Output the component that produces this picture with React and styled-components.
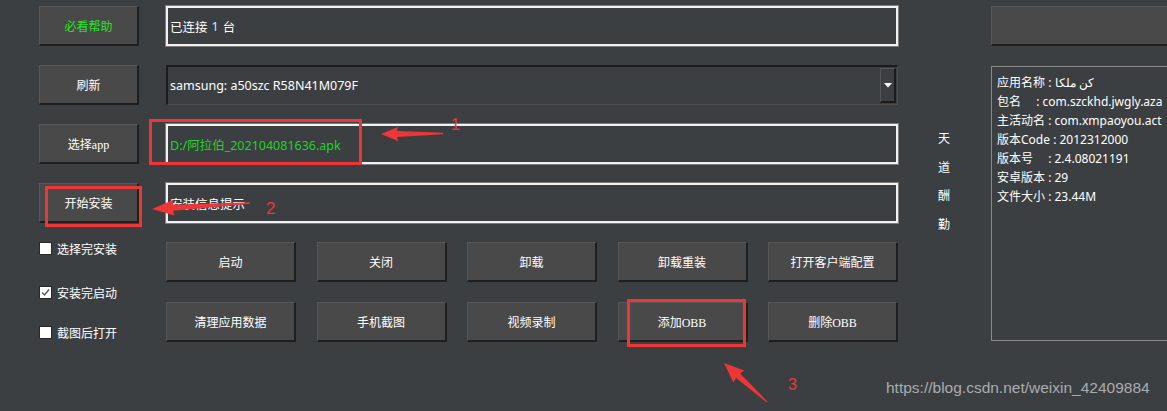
import React from 'react'
import styled, { createGlobalStyle } from 'styled-components'

const Global = createGlobalStyle`
  body {
    margin: 0;
    background: #3c3f42;
    font-family: "Noto Sans", "Noto Sans CJK SC", sans-serif;
  }
`

const Page = styled.div`
  position: relative;
  width: 1167px;
  height: 411px;
  overflow: hidden;
  background: #3c3f42;
  color: #fff;
  display: flex;
  align-items: flex-start;
  padding: 6px 0 0 39px;
  box-sizing: border-box;
`

const LeftCol = styled.div`
  width: 100px;
  flex-shrink: 0;
  display: flex;
  flex-direction: column;
  gap: 19px;
`

const Button = styled.div`
  box-sizing: border-box;
  height: 40px;
  width: ${(p) => p.$w || '100%'};
  background: #4a4949;
  border-top: 1px solid #575757;
  border-left: 1px solid #575757;
  border-right: 2px solid #1f1f1f;
  border-bottom: 2px solid #1f1f1f;
  display: flex;
  align-items: center;
  justify-content: center;
  font-family: "Liberation Serif", "Noto Sans CJK SC", serif;
  font-size: 12px;
  color: ${(p) => p.$color || '#fff'};
`

const CheckList = styled.div`
  display: flex;
  flex-direction: column;
`

const CheckRow = styled.div`
  display: flex;
  align-items: center;
  height: 13px;
  margin-top: ${(p) => p.$mt}px;
  font-family: "Noto Sans CJK SC", sans-serif;
  font-size: 12px;
  white-space: nowrap;
`

const Box = styled.div`
  box-sizing: border-box;
  width: 13px;
  height: 13px;
  background: #fff;
  border: 1px solid #2a2a2a;
  margin-right: 5px;
  display: flex;
  align-items: center;
  justify-content: center;
`

const MidCol = styled.div`
  width: 732px;
  margin-left: 27px;
  flex-shrink: 0;
  display: flex;
  flex-direction: column;
  gap: 19px;
`

const Field = styled.div`
  box-sizing: border-box;
  height: 40px;
  border: 2px solid #f2f2f2;
  box-shadow: 0 0 0 1px #7d7d7d;
  display: flex;
  align-items: center;
  padding-left: 2px;
  font-size: 12.5px;
  color: ${(p) => p.$color || '#fff'};
`

const Combo = styled.div`
  box-sizing: border-box;
  height: 40px;
  border-top: 2px solid #1b1b1b;
  border-left: 2px solid #1b1b1b;
  border-right: 1px solid #4d4d4d;
  border-bottom: 1px solid #4d4d4d;
  display: flex;
  align-items: center;
  padding-left: 2px;
  padding-right: 1px;
  font-size: 12.5px;
`

const ComboText = styled.div`
  flex: 1;
`

const DropButton = styled.div`
  box-sizing: border-box;
  width: 16px;
  height: 35px;
  border-top: 1px solid #555;
  border-left: 1px solid #555;
  border-right: 2px solid #1b1b1b;
  border-bottom: 2px solid #1b1b1b;
  display: flex;
  align-items: center;
  justify-content: center;
`

const Grid = styled.div`
  display: grid;
  grid-template-columns: repeat(5, 130px);
  justify-content: space-between;
  row-gap: 20px;
`

const VText = styled.div`
  margin-left: 40px;
  margin-top: 118px;
  display: flex;
  flex-direction: column;
  font-family: "Noto Sans CJK SC", sans-serif;
  font-size: 12px;
  line-height: 28.5px;
`

const RightCol = styled.div`
  margin-left: 41px;
  width: 220px;
  flex-shrink: 0;
  display: flex;
  flex-direction: column;
  gap: 20px;
`

const InfoBox = styled.div`
  box-sizing: border-box;
  height: 275px;
  border: 1px solid #8a8a8a;
  padding: 6px 5px;
  font-size: 12px;
  line-height: 19px;
  white-space: nowrap;
`

const Overlay = styled.svg`
  position: absolute;
  left: 0;
  top: 0;
  pointer-events: none;
`

const Mark = styled.div`
  position: absolute;
  left: ${(p) => p.$x}px;
  top: ${(p) => p.$y}px;
  width: ${(p) => p.$w}px;
  height: ${(p) => p.$h}px;
  box-sizing: border-box;
  border: 3px solid #ee3636;
`

const Num = styled.div`
  position: absolute;
  left: ${(p) => p.$x}px;
  top: ${(p) => p.$y}px;
  font-family: "Liberation Sans", sans-serif;
  font-size: ${(p) => p.$size}px;
  color: #ee3636;
`

const Watermark = styled.div`
  position: absolute;
  left: 886px;
  top: 379px;
  font-family: "Liberation Sans", sans-serif;
  font-size: 15.5px;
  color: #a9abad;
`

function arrowPoints(tip, tail, headLen, headHalf, nearHalf, farHalf) {
  const dx = tail[0] - tip[0]
  const dy = tail[1] - tip[1]
  const len = Math.hypot(dx, dy)
  const ux = dx / len
  const uy = dy / len
  const nx = -uy
  const ny = ux
  const bx = tip[0] + ux * headLen
  const by = tip[1] + uy * headLen
  const p = (x, y) => `${x.toFixed(1)},${y.toFixed(1)}`
  return [
    p(tip[0], tip[1]),
    p(bx + nx * headHalf, by + ny * headHalf),
    p(bx - ux * 1 + nx * nearHalf, by - uy * 1 + ny * nearHalf),
    p(tail[0] + nx * farHalf, tail[1] + ny * farHalf),
    p(tail[0] - nx * farHalf, tail[1] - ny * farHalf),
    p(bx - ux * 1 - nx * nearHalf, by - uy * 1 - ny * nearHalf),
    p(bx - nx * headHalf, by - ny * headHalf),
  ].join(' ')
}

const gridButtons = [
  '启动', '关闭', '卸载', '卸载重装', '打开客户端配置',
  '清理应用数据', '手机截图', '视频录制', '添加OBB', '删除OBB',
]

const info = [
  ['应用名称', <span dir="rtl">كن ملكا</span>],
  ['包名\u3000  ', 'com.szckhd.jwgly.aza'],
  ['主活动名', 'com.xmpaoyou.act'],
  ['版本Code', '2012312000'],
  ['版本号\u3000', '2.4.08021191'],
  ['安卓版本', '29'],
  ['文件大小', '23.44M'],
]

const checks = [
  { label: '选择完安装', checked: false, mt: 0 },
  { label: '安装完启动', checked: true, mt: 31 },
  { label: '截图后打开', checked: false, mt: 27 },
]

export default function App() {
  return (
    <Page>
      <Global />
      <LeftCol>
        <Button $color="#22e622">必看帮助</Button>
        <Button>刷新</Button>
        <Button>选择app</Button>
        <Button>开始安装</Button>
        <CheckList>
          {checks.map((c) => (
            <CheckRow key={c.label} $mt={c.mt}>
              <Box>
                {c.checked && (
                  <svg width="9" height="9" viewBox="0 0 9 9">
                    <polyline points="1,4.5 3.5,7 8,1.5" fill="none" stroke="#555" strokeWidth="1.4" />
                  </svg>
                )}
              </Box>
              {c.label}
            </CheckRow>
          ))}
        </CheckList>
      </LeftCol>

      <MidCol>
        <Field>已连接 <span style={{ color: '#d6e6ff', margin: '0 4px' }}>1</span> 台</Field>
        <Combo>
          <ComboText>samsung: a50szc R58N41M079F</ComboText>
          <DropButton>
            <svg width="8" height="5" viewBox="0 0 8 5">
              <polygon points="0,0 8,0 4,4.5" fill="#fff" />
            </svg>
          </DropButton>
        </Combo>
        <Field $color="#1fd41f">D:/阿拉伯_202104081636.apk</Field>
        <Field>安装信息提示</Field>
        <Grid>
          {gridButtons.map((b) => (
            <Button key={b}>{b}</Button>
          ))}
        </Grid>
      </MidCol>

      <VText>
        <span>天</span>
        <span>道</span>
        <span>酬</span>
        <span>勤</span>
      </VText>

      <RightCol>
        <Button />
        <InfoBox>
          {info.map(([k, v], i) => (
            <div key={i}>
              {k} : {v}
            </div>
          ))}
        </InfoBox>
      </RightCol>

      <Mark $x={149} $y={119} $w={213} $h={46} />
      <Mark $x={45} $y={186} $w={97} $h={41} />
      <Mark $x={627} $y={299} $w={119} $h={48} />

      <Overlay width="1167" height="411" viewBox="0 0 1167 411">
        <polygon points={arrowPoints([381, 134], [443, 133.5], 17, 7, 3, 0.8)} fill="#ee3636" />
        <polygon points={arrowPoints([152, 209], [250, 203], 22, 8, 3, 0.8)} fill="#ee3636" />
        <polygon points={arrowPoints([724, 363], [767, 402], 20, 8, 3, 0.6)} fill="#ee3636" />
      </Overlay>

      <Num $x={451} $y={116} $size={16}>1</Num>
      <Num $x={266} $y={199} $size={17}>2</Num>
      <Num $x={788} $y={376} $size={16}>3</Num>

      <Watermark>https://blog.csdn.net/weixin_42409884</Watermark>
    </Page>
  )
}
